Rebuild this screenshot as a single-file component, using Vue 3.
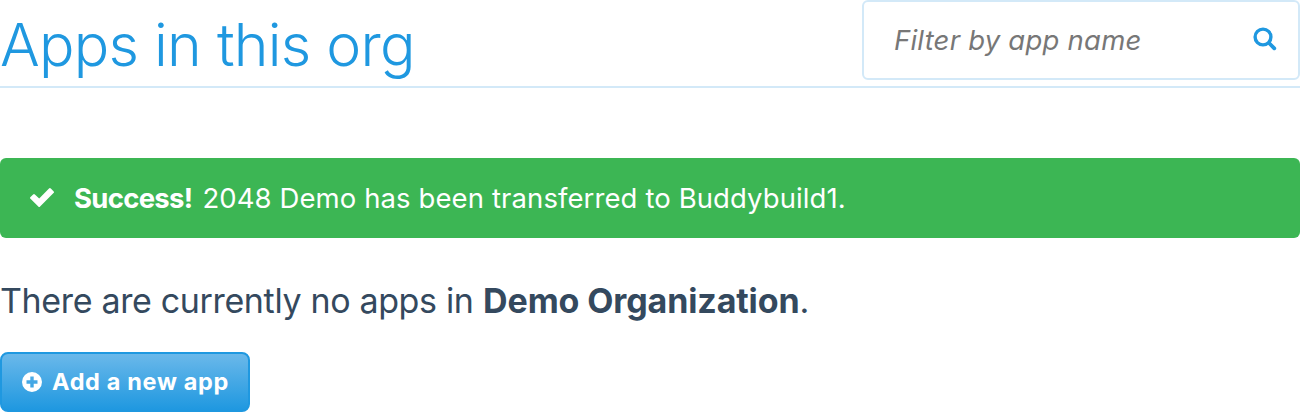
<script setup>
import { ref } from 'vue'

const filter = ref('')
const appName = '2048 Demo'
const target = 'Buddybuild1'
const organization = 'Demo Organization'
</script>

<template>
  <main class="page">
    <header class="header">
      <h1 class="title">Apps in this org</h1>
      <label class="filter">
        <input v-model="filter" class="filter-input" type="text" placeholder="Filter by app name" />
        <svg class="search-icon" viewBox="0 0 24 24" aria-hidden="true">
          <circle cx="10" cy="10" r="7.9" fill="none" stroke="currentColor" stroke-width="3.4" />
          <path d="M16 16l5.3 5.3" stroke="currentColor" stroke-width="3.8" stroke-linecap="round" />
        </svg>
      </label>
    </header>

    <div class="alert">
      <svg class="check-icon" viewBox="0 0 24 19" aria-hidden="true">
        <path d="M3.1 6.4 0.5 9a1.2 1.2 0 0 0 0 1.8l7.8 7.6a1.2 1.2 0 0 0 1.8 0L23.5 5a1.2 1.2 0 0 0 0-1.8L20.8.6a1.2 1.2 0 0 0-1.8 0L9.2 10.4 4.9 6.4a1.2 1.2 0 0 0-1.8 0z" fill="currentColor" />
      </svg>
      <p class="alert-text">
        <strong class="alert-label">Success!</strong>
        <span class="alert-message">{{ appName }} has been transferred to {{ target }}.</span>
      </p>
    </div>

    <p class="empty"><span class="empty-lead">There are currently no apps in</span> <strong class="empty-org">{{ organization }}</strong>.</p>

    <button class="add" type="button">
      <svg class="plus-icon" viewBox="0 0 20 20" aria-hidden="true">
        <path fill-rule="evenodd" d="M10 0a10 10 0 1 1 0 20 10 10 0 0 1 0-20zM8.3 4.5v3.8H4.5v3.4h3.8v3.8h3.4v-3.8h3.8V8.3h-3.8V4.5z" fill="currentColor" />
      </svg>
      <span class="add-label">Add a new app</span>
    </button>
  </main>
</template>

<style>
body {
  margin: 0;
  background: #fff;
}
</style>

<style scoped>
.page {
  box-sizing: border-box;
  width: 100%;
  height: 412px;
  overflow: hidden;
  color: #34495e;
  font-family: Inter, Lato, sans-serif;
}

.header {
  display: flex;
  justify-content: space-between;
  align-items: flex-start;
  height: 86px;
  border-bottom: 2px solid #d3e9f8;
}

.title {
  margin: 0;
  color: #1f98e0;
  font-size: 59px;
  font-weight: 300;
  letter-spacing: -0.75px;
  line-height: 89px;
  white-space: nowrap;
}

.filter {
  display: flex;
  align-items: center;
  box-sizing: border-box;
  width: 438px;
  height: 80px;
  padding: 0 21px 0 30px;
  border: 2px solid #d3e9f8;
  border-radius: 6px;
}

.filter-input {
  flex: 1;
  min-width: 0;
  height: 76px;
  padding: 0;
  border: 0;
  outline: 0;
  background: transparent;
  color: #34495e;
  font: italic 400 27.5px Inter, Lato, sans-serif;
  font-feature-settings: "cv11";
  letter-spacing: 0.22px;
}

.filter-input::placeholder {
  color: #777;
  opacity: 1;
}

.search-icon {
  width: 24px;
  height: 24px;
  margin-bottom: 2px;
  color: #1f98e0;
}

.alert {
  display: flex;
  align-items: center;
  box-sizing: border-box;
  height: 80px;
  margin-top: 70px;
  padding: 0 30px;
  border-radius: 6px;
  background: #3cb654;
  color: #fff;
}

.check-icon {
  width: 24px;
  height: 19px;
  margin: 0 20px 2px 0;
}

.alert-text {
  display: flex;
  gap: 10px;
  margin: 0;
  font-size: 27.5px;
  line-height: 80px;
  white-space: nowrap;
}

.alert-label {
  letter-spacing: -0.7px;
}

.alert-message {
  letter-spacing: 0.1px;
}

.empty {
  margin: 42px 0 0;
  font-size: 34px;
  line-height: 42px;
  white-space: nowrap;
}

.empty-lead {
  letter-spacing: -0.35px;
}

.empty-org {
  letter-spacing: -0.12px;
}

.add {
  display: flex;
  align-items: center;
  box-sizing: border-box;
  width: 250px;
  height: 60px;
  margin-top: 30px;
  padding: 0 10px 0 20px;
  border: 2px solid #1f98e0;
  border-radius: 8px;
  background: linear-gradient(#6ab8ea, #1f98e0);
  color: #fff;
  font: 700 23.5px Inter, Lato, sans-serif;
  letter-spacing: 0.65px;
}

.plus-icon {
  flex: none;
  width: 20px;
  height: 20px;
  margin-right: 10px;
}

.add-label {
  padding-bottom: 1px;
  white-space: nowrap;
}
</style>
